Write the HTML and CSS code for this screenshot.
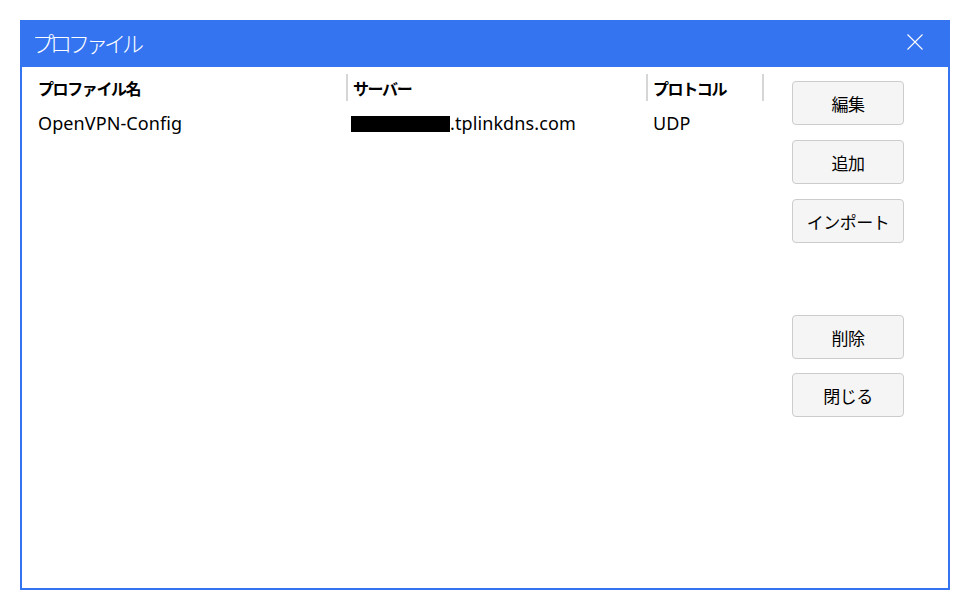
FILE: index.html
```html
<!DOCTYPE html>
<html lang="ja">
<head>
<meta charset="utf-8">
<link rel="stylesheet" href="styles.css">
</head>
<body>
<div class="window">
  <div class="titlebar">
    <span class="title">プロファイル</span>
    <span class="close">
      <svg width="16" height="16" viewBox="0 0 16 16"><path d="M0.5 0.5 L15.5 15.5 M15.5 0.5 L0.5 15.5" stroke="#ffffff" stroke-width="1.1" fill="none"/></svg>
    </span>
  </div>
  <div class="content">
    <div class="table">
      <div class="row head">
        <div class="cell c1">プロファイル名</div>
        <div class="cell c2">サーバー</div>
        <div class="cell c3">プロトコル</div>
      </div>
      <div class="row data">
        <div class="cell c1">OpenVPN-Config</div>
        <div class="cell c2"><span class="redact"></span>.tplinkdns.com</div>
        <div class="cell c3">UDP</div>
      </div>
    </div>
    <div class="buttons">
      <button class="btn">編集</button>
      <button class="btn">追加</button>
      <button class="btn">インポート</button>
      <button class="btn gap">削除</button>
      <button class="btn last">閉じる</button>
    </div>
  </div>
</div>
</body>
</html>
```
FILE: styles.css
```css
html, body {
  margin: 0;
  padding: 0;
  background: #ffffff;
}
body {
  font-family: "Noto Sans", "Noto Sans CJK JP", sans-serif;
  color: #000;
}
.window {
  margin: 20px 0 0 20px;
  width: 930px;
  height: 570px;
  box-sizing: border-box;
  background: #3574f0;
  padding: 0 2px 2px 2px;
  display: flex;
  flex-direction: column;
}
.titlebar {
  height: 47px;
  flex: none;
  display: flex;
  align-items: center;
  justify-content: space-between;
  padding: 0 25px 0 10px;
}
.title {
  color: #ffffff;
  font-family: "Noto Sans CJK JP", sans-serif;
  font-weight: 300;
  font-size: 22px;
  letter-spacing: -4px;
  margin-top: -3px;
}
.close {
  display: flex;
  margin-top: -4px;
}
.content {
  flex: 1;
  background: #ffffff;
  display: flex;
}
.table {
  width: 744px;
  padding-top: 7px;
}
.row {
  display: grid;
  grid-template-columns: 324px 300px 118px;
}
.head .cell {
  height: 27px;
  display: flex;
  align-items: center;
  font-family: "Noto Sans CJK JP", sans-serif;
  font-weight: 700;
  font-size: 16px;
  letter-spacing: -1.4px;
}
.head .c1 { padding-left: 16px; }
.head .c2, .head .c3 {
  border-left: 2px solid #d6d6d6;
  padding-left: 5px;
}
.head .c3 { border-right: 2px solid #d6d6d6; }
.data .cell {
  height: 46px;
  display: flex;
  align-items: center;
  font-size: 18px;
  letter-spacing: 0.1px;
  padding-bottom: 2px;
  box-sizing: border-box;
}
.data .c1 { padding-left: 16px; }
.data .c2 { padding-left: 5px; }
.data .c3 { padding-left: 7px; }
.redact {
  display: inline-block;
  width: 99px;
  height: 16px;
  background: #000;
  margin-top: 1px;
}
.buttons {
  display: flex;
  flex-direction: column;
  padding: 14px 0 0 26px;
  gap: 15px;
}
.btn {
  width: 112px;
  height: 44px;
  background: #f5f5f5;
  border: 1px solid #cccccc;
  border-radius: 4px;
  font-family: "Noto Sans CJK JP", sans-serif;
  font-size: 17px;
  letter-spacing: -0.5px;
  color: #000;
  padding: 0;
}
.btn.gap { margin-top: 57px; }
.btn.last { margin-top: -1px; }
```
